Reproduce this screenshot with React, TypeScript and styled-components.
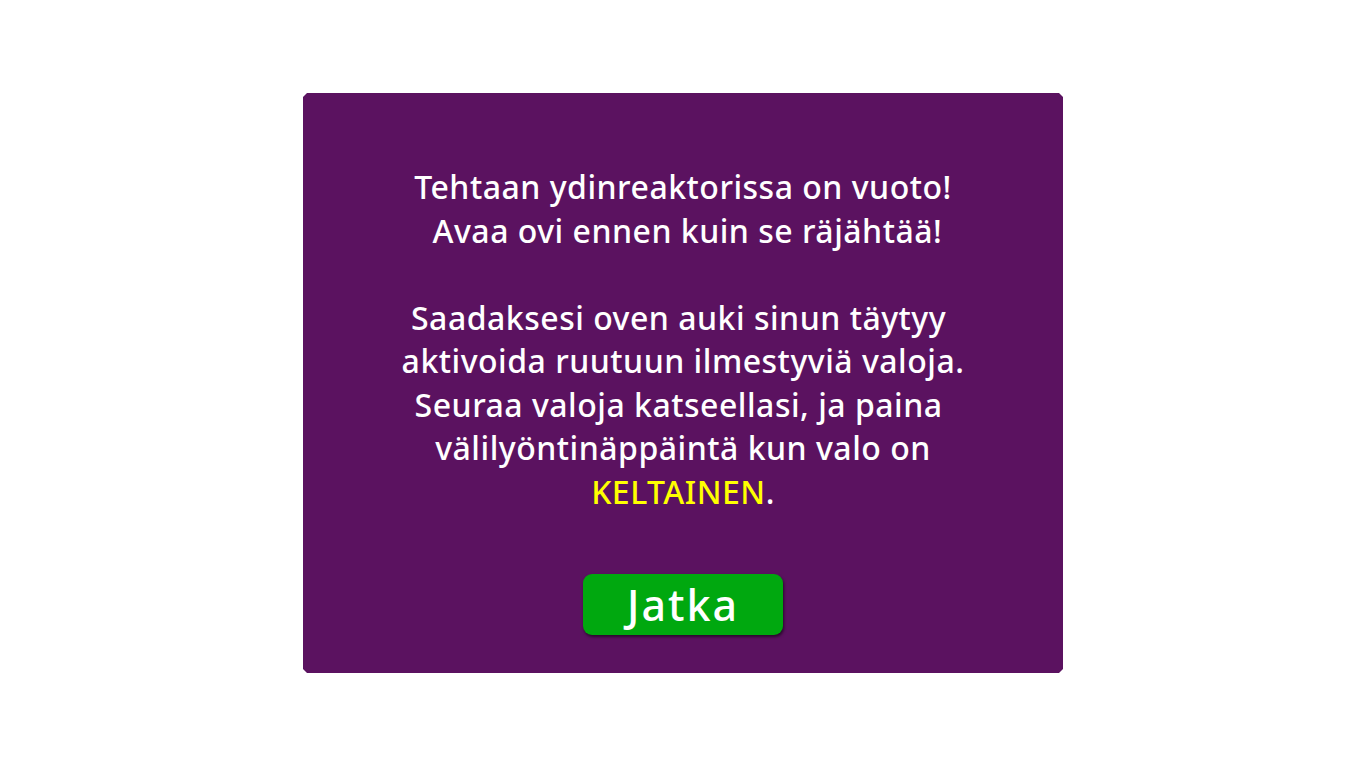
import React from "react";
import styled, { createGlobalStyle } from "styled-components";

const Global = createGlobalStyle`
  html, body { margin: 0; padding: 0; background: #ffffff; }
  body { font-family: "Noto Sans", "Open Sans", sans-serif; }
`;

const Page = styled.div`
  width: 1366px;
  height: 768px;
  display: flex;
  justify-content: center;
  padding-top: 93px;
  box-sizing: border-box;
`;

const Panel = styled.div`
  width: 760px;
  height: 580px;
  background: #5b1260;
  clip-path: polygon(4px 0, calc(100% - 4px) 0, 100% 4px, 100% calc(100% - 4px), calc(100% - 4px) 100%, 4px 100%, 0 calc(100% - 4px), 0 4px);
  display: flex;
  flex-direction: column;
  align-items: center;
  padding-top: 72px;
  box-sizing: border-box;
`;

const Message = styled.div`
  color: #ffffff;
  font-family: "Noto Sans", "Open Sans", sans-serif;
  font-size: 32px;
  font-weight: 500;
  line-height: 43.5px;
  letter-spacing: 0.5px;
  text-align: center;
  white-space: pre;
`;

const Highlight = styled.span`
  color: #ffff00;
`;

const Button = styled.button`
  margin-top: 61px;
  width: 200px;
  height: 61px;
  border: none;
  border-radius: 9px;
  background: #00a80f;
  box-shadow: 1px 2px 3px rgba(0, 0, 0, 0.55);
  color: #ffffff;
  font-family: "Noto Sans", "Open Sans", sans-serif;
  font-size: 43px;
  font-weight: 500;
  letter-spacing: 2px;
  padding: 0;
  display: flex;
  align-items: center;
  justify-content: center;
  cursor: pointer;
`;

export default function App() {
  return (
    <>
      <Global />
      <Page>
        <Panel>
          <Message>
            {"Tehtaan ydinreaktorissa on vuoto!\n Avaa ovi ennen kuin se räjähtää!\n\nSaadaksesi oven auki sinun täytyy \naktivoida ruutuun ilmestyviä valoja.\nSeuraa valoja katseellasi, ja paina \nvälilyöntinäppäintä kun valo on\n"}
            <Highlight>KELTAINEN</Highlight>.
          </Message>
          <Button>Jatka</Button>
        </Panel>
      </Page>
    </>
  );
}
